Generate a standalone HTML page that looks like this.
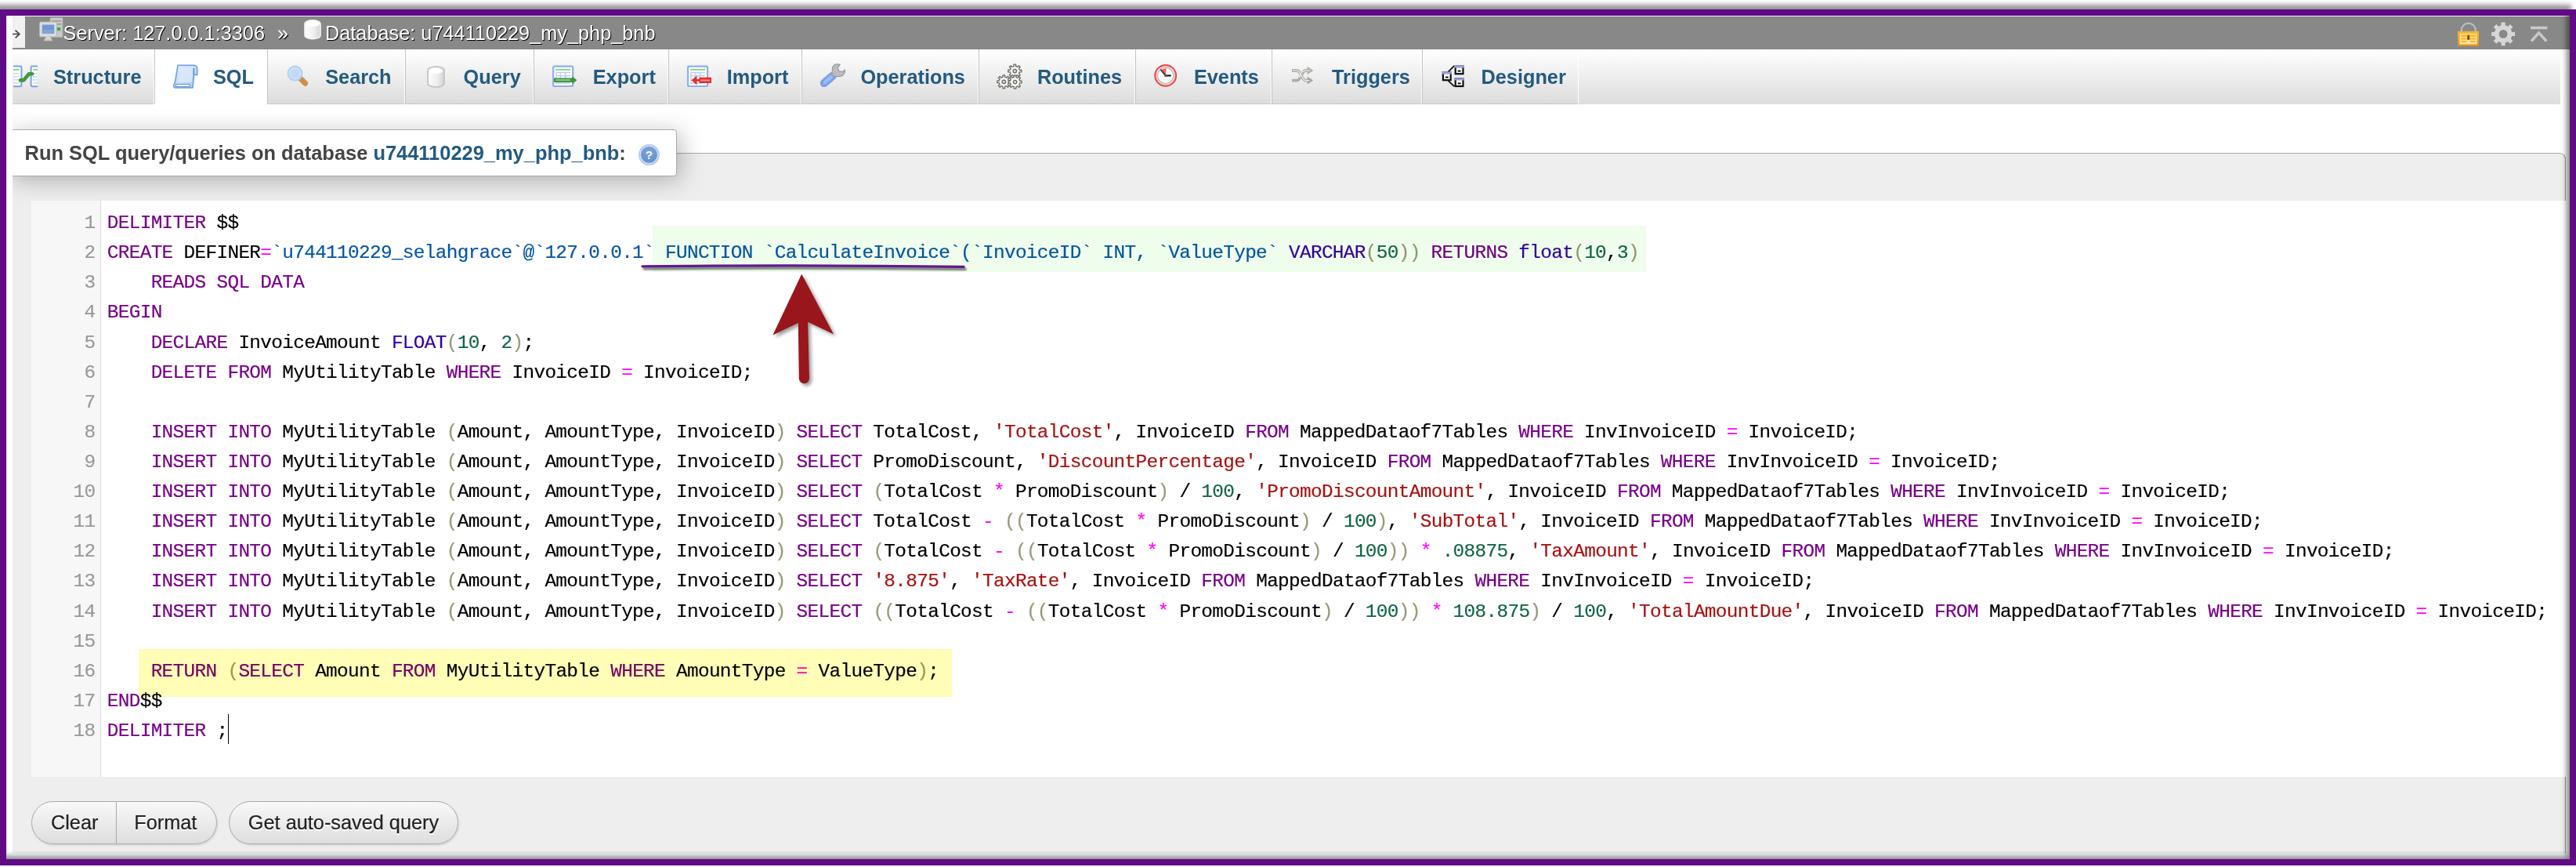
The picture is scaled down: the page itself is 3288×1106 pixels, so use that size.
<!DOCTYPE html>
<html lang="en">
<head>
<meta charset="utf-8">
<title>phpMyAdmin - Run SQL query</title>
<style>
html,body{margin:0;padding:0;}
body{width:3288px;height:1106px;position:relative;overflow:hidden;background:#fff;
  font-family:"Liberation Sans",Arial,sans-serif;}
.abs{position:absolute;}
#page{position:absolute;left:8px;top:20px;width:3272px;height:1076px;background:#fff;overflow:hidden;}
/* everything inside #stage uses full-image coordinates */
#stage{position:absolute;left:-8px;top:-20px;width:3288px;height:1106px;}
#frame{position:absolute;left:0;top:12px;width:3272px;height:1076px;border:8px solid #610a86;
  box-shadow:-6px -5.8px 6px rgba(0,0,0,.42), inset -4px -4px 7px rgba(0,0,0,.48);pointer-events:none;z-index:50;}

#topbar{left:16px;top:21px;width:3264px;height:41.5px;background:#888;}
#gohome{left:16px;top:21px;width:16px;height:40px;background:#f1f1f1;color:#333;font-size:13px;line-height:39px;text-align:center;}
.crumb{top:21.5px;height:41.5px;line-height:41.5px;color:#fff;font-size:25.3px;white-space:nowrap;
  text-shadow:1px 1px 0 #000;}

#tabs{left:16px;top:62.5px;width:3252px;height:70px;border-bottom:0;background:linear-gradient(#fff,#dcdcdc);}
.tab{top:62.5px;height:70px;box-sizing:border-box;border-left:1px solid #c2c2c2;border-right:1px solid #fff;border-bottom:1px solid #c8c8c8;}
.tab.on{background:#fff;border-bottom:1px solid #fff;}
.tl{top:62.5px;height:70px;line-height:70px;color:#235a81;font-weight:bold;font-size:25.3px;white-space:nowrap;}
.ic{width:30px;height:30px;}

#fs{left:16px;top:195px;width:3259px;height:894px;box-sizing:border-box;background:#eee;border:1px solid #aaa;border-left:0;border-bottom:0;border-right-color:#999;border-radius:0 8px 0 0;}
#legend{left:10px;top:165px;width:854px;height:60px;box-sizing:border-box;background:#fff;border:1px solid #aaa;border-radius:4px;
  box-shadow:5px 5px 30px rgba(0,0,0,.27);}
#legtxt{left:31.6px;top:165px;height:60px;line-height:61px;font-size:25.45px;font-weight:bold;color:#444;white-space:nowrap;}
#legtxt b{color:#235a81;}

#ed{left:40px;top:256px;width:3240px;height:735px;background:#fff;}
#gut{left:40px;top:256px;width:88px;height:735px;background:#f7f7f7;border-right:1px solid #ddd;}
.cl,.ln{position:absolute;font-family:"Liberation Mono","DejaVu Sans Mono",monospace;font-size:24.4px;letter-spacing:-0.672px;
  line-height:38.12px;height:38.12px;white-space:pre;color:#000;-webkit-text-stroke:0.17px currentColor;}
.cl{left:136.8px;}
.ln{left:40px;width:81.5px;text-align:right;color:#999;}
.k{color:#708}.b{color:#30a}.n{color:#164}.s{color:#a11}.p{color:#997}.o{color:#f0f}.v{color:#05a}
#hl1{left:833px;top:288px;width:1267.5px;height:59px;background:#effdec;mix-blend-mode:multiply;}
#hl2{left:177px;top:828px;width:1038px;height:61px;background:#fffdb6;mix-blend-mode:multiply;}
#cursor{left:291px;top:911px;width:1px;height:38px;background:#000;}

.btn{top:1022px;height:55px;box-sizing:border-box;border:1px solid #aaa;background:linear-gradient(#f8f8f8,#dedede);
  color:#222;font-size:25.3px;line-height:52px;text-align:center;white-space:nowrap;text-shadow:0 1.9px 0 #fff;-webkit-text-stroke:.2px #222;box-shadow:1px 1.5px 2.5px rgba(0,0,0,.12);}
</style>
</head>
<body>
<div id="page"><div id="stage">

<div id="topbar" class="abs"></div>
<div id="gohome" class="abs"></div>
<div class="abs crumb" style="left:80.6px">Server: 127.0.0.1:3306</div>
<div class="abs crumb" style="left:354px">»</div>
<div class="abs crumb" style="left:415px">Database: u744110229_my_php_bnb</div>

<div id="tabs" class="abs"></div>
<div class="abs tab" style="left:16px;width:181px;border-left:0"></div>
<div class="abs tab on" style="left:197px;width:144px"></div>
<div class="abs tab" style="left:341px;width:176px"></div>
<div class="abs tab" style="left:517px;width:164px"></div>
<div class="abs tab" style="left:681px;width:172px"></div>
<div class="abs tab" style="left:853px;width:170px"></div>
<div class="abs tab" style="left:1023px;width:226px"></div>
<div class="abs tab" style="left:1249px;width:200px"></div>
<div class="abs tab" style="left:1449px;width:174px"></div>
<div class="abs tab" style="left:1623px;width:192px"></div>
<div class="abs tab" style="left:1815px;width:200px"></div>

<div class="abs tl" style="left:68.0px">Structure</div>
<div class="abs tl" style="left:271.9px">SQL</div>
<div class="abs tl" style="left:415.2px">Search</div>
<div class="abs tl" style="left:591.6px">Query</div>
<div class="abs tl" style="left:756.7px">Export</div>
<div class="abs tl" style="left:927.7px">Import</div>
<div class="abs tl" style="left:1098.4px">Operations</div>
<div class="abs tl" style="left:1323.9px">Routines</div>
<div class="abs tl" style="left:1523.9px">Events</div>
<div class="abs tl" style="left:1700.0px">Triggers</div>
<div class="abs tl" style="left:1890.5px">Designer</div>

<!--ICONS-->

<div id="fs" class="abs"></div>
<div id="legend" class="abs"></div>
<div id="legtxt" class="abs">Run SQL query/queries on database <b>u744110229_my_php_bnb</b>:</div>

<div id="ed" class="abs"></div>
<div id="gut" class="abs"></div>
<div class="ln" style="top:266.05px">1</div>
<div class="ln" style="top:304.17px">2</div>
<div class="ln" style="top:342.29px">3</div>
<div class="ln" style="top:380.41px">4</div>
<div class="ln" style="top:418.53px">5</div>
<div class="ln" style="top:456.65px">6</div>
<div class="ln" style="top:494.77px">7</div>
<div class="ln" style="top:532.89px">8</div>
<div class="ln" style="top:571.01px">9</div>
<div class="ln" style="top:609.13px">10</div>
<div class="ln" style="top:647.25px">11</div>
<div class="ln" style="top:685.37px">12</div>
<div class="ln" style="top:723.49px">13</div>
<div class="ln" style="top:761.61px">14</div>
<div class="ln" style="top:799.73px">15</div>
<div class="ln" style="top:837.85px">16</div>
<div class="ln" style="top:875.97px">17</div>
<div class="ln" style="top:914.09px">18</div>

<div class="cl" style="top:266.05px"><span class="k">DELIMITER</span> $$</div>
<div class="cl" style="top:304.17px"><span class="k">CREATE</span> DEFINER<span class="o">=</span><span class="v">`u744110229_selahgrace`@`127.0.0.1` FUNCTION `CalculateInvoice`(`InvoiceID` INT, `ValueType`</span> <span class="b">VARCHAR</span><span class="p">(</span><span class="n">50</span><span class="p">))</span> <span class="k">RETURNS</span> <span class="b">float</span><span class="p">(</span><span class="n">10</span>,<span class="n">3</span><span class="p">)</span></div>
<div class="cl" style="top:342.29px">    <span class="k">READS</span> <span class="k">SQL</span> <span class="k">DATA</span></div>
<div class="cl" style="top:380.41px"><span class="k">BEGIN</span></div>
<div class="cl" style="top:418.53px">    <span class="k">DECLARE</span> InvoiceAmount <span class="b">FLOAT</span><span class="p">(</span><span class="n">10</span>, <span class="n">2</span><span class="p">)</span>;</div>
<div class="cl" style="top:456.65px">    <span class="k">DELETE</span> <span class="k">FROM</span> MyUtilityTable <span class="k">WHERE</span> InvoiceID <span class="o">=</span> InvoiceID;</div>
<div class="cl" style="top:494.77px"></div>
<div class="cl" style="top:532.89px">    <span class="k">INSERT</span> <span class="k">INTO</span> MyUtilityTable <span class="p">(</span>Amount, AmountType, InvoiceID<span class="p">)</span> <span class="k">SELECT</span> TotalCost, <span class="s">'TotalCost'</span>, InvoiceID <span class="k">FROM</span> MappedDataof7Tables <span class="k">WHERE</span> InvInvoiceID <span class="o">=</span> InvoiceID;</div>
<div class="cl" style="top:571.01px">    <span class="k">INSERT</span> <span class="k">INTO</span> MyUtilityTable <span class="p">(</span>Amount, AmountType, InvoiceID<span class="p">)</span> <span class="k">SELECT</span> PromoDiscount, <span class="s">'DiscountPercentage'</span>, InvoiceID <span class="k">FROM</span> MappedDataof7Tables <span class="k">WHERE</span> InvInvoiceID <span class="o">=</span> InvoiceID;</div>
<div class="cl" style="top:609.13px">    <span class="k">INSERT</span> <span class="k">INTO</span> MyUtilityTable <span class="p">(</span>Amount, AmountType, InvoiceID<span class="p">)</span> <span class="k">SELECT</span> <span class="p">(</span>TotalCost <span class="o">*</span> PromoDiscount<span class="p">)</span> / <span class="n">100</span>, <span class="s">'PromoDiscountAmount'</span>, InvoiceID <span class="k">FROM</span> MappedDataof7Tables <span class="k">WHERE</span> InvInvoiceID <span class="o">=</span> InvoiceID;</div>
<div class="cl" style="top:647.25px">    <span class="k">INSERT</span> <span class="k">INTO</span> MyUtilityTable <span class="p">(</span>Amount, AmountType, InvoiceID<span class="p">)</span> <span class="k">SELECT</span> TotalCost <span class="o">-</span> <span class="p">((</span>TotalCost <span class="o">*</span> PromoDiscount<span class="p">)</span> / <span class="n">100</span><span class="p">)</span>, <span class="s">'SubTotal'</span>, InvoiceID <span class="k">FROM</span> MappedDataof7Tables <span class="k">WHERE</span> InvInvoiceID <span class="o">=</span> InvoiceID;</div>
<div class="cl" style="top:685.37px">    <span class="k">INSERT</span> <span class="k">INTO</span> MyUtilityTable <span class="p">(</span>Amount, AmountType, InvoiceID<span class="p">)</span> <span class="k">SELECT</span> <span class="p">(</span>TotalCost <span class="o">-</span> <span class="p">((</span>TotalCost <span class="o">*</span> PromoDiscount<span class="p">)</span> / <span class="n">100</span><span class="p">))</span> <span class="o">*</span> <span class="n">.08875</span>, <span class="s">'TaxAmount'</span>, InvoiceID <span class="k">FROM</span> MappedDataof7Tables <span class="k">WHERE</span> InvInvoiceID <span class="o">=</span> InvoiceID;</div>
<div class="cl" style="top:723.49px">    <span class="k">INSERT</span> <span class="k">INTO</span> MyUtilityTable <span class="p">(</span>Amount, AmountType, InvoiceID<span class="p">)</span> <span class="k">SELECT</span> <span class="s">'8.875'</span>, <span class="s">'TaxRate'</span>, InvoiceID <span class="k">FROM</span> MappedDataof7Tables <span class="k">WHERE</span> InvInvoiceID <span class="o">=</span> InvoiceID;</div>
<div class="cl" style="top:761.61px">    <span class="k">INSERT</span> <span class="k">INTO</span> MyUtilityTable <span class="p">(</span>Amount, AmountType, InvoiceID<span class="p">)</span> <span class="k">SELECT</span> <span class="p">((</span>TotalCost <span class="o">-</span> <span class="p">((</span>TotalCost <span class="o">*</span> PromoDiscount<span class="p">)</span> / <span class="n">100</span><span class="p">))</span> <span class="o">*</span> <span class="n">108.875</span><span class="p">)</span> / <span class="n">100</span>, <span class="s">'TotalAmountDue'</span>, InvoiceID <span class="k">FROM</span> MappedDataof7Tables <span class="k">WHERE</span> InvInvoiceID <span class="o">=</span> InvoiceID;</div>
<div class="cl" style="top:799.73px"></div>
<div class="cl" style="top:837.85px">    <span class="k">RETURN</span> <span class="p">(</span><span class="k">SELECT</span> Amount <span class="k">FROM</span> MyUtilityTable <span class="k">WHERE</span> AmountType <span class="o">=</span> ValueType<span class="p">)</span>;</div>
<div class="cl" style="top:875.97px"><span class="k">END</span>$$</div>
<div class="cl" style="top:914.09px"><span class="k">DELIMITER</span> ;</div>

<div id="hl1" class="abs"></div>
<div id="hl2" class="abs"></div>
<div id="cursor" class="abs"></div>

<svg class="abs" style="left:0;top:0" width="3288" height="1106" viewBox="0 0 3288 1106">
<defs>
<linearGradient id="gcyl" x1="0" x2="1" y1="0" y2="0"><stop offset="0" stop-color="#fdfdfd"/><stop offset=".55" stop-color="#f0f0f0"/><stop offset="1" stop-color="#d2d2d2"/></linearGradient>
<linearGradient id="gsql" x1="0" x2="1" y1="0" y2="1"><stop offset="0" stop-color="#e4effc"/><stop offset="1" stop-color="#a8c8f2"/></linearGradient>
<linearGradient id="glock" x1="0" x2="0" y1="0" y2="1"><stop offset="0" stop-color="#f3b63a"/><stop offset="1" stop-color="#e8901c"/></linearGradient>
<linearGradient id="glocki" x1="0" x2="0" y1="0" y2="1"><stop offset="0" stop-color="#ffd75e"/><stop offset="1" stop-color="#ffe9a8"/></linearGradient>
<radialGradient id="ghelp" cx=".5" cy=".35" r=".7"><stop offset="0" stop-color="#7ea7da"/><stop offset="1" stop-color="#5f8ec9"/></radialGradient>
<clipPath id="cstruct"><rect x="17" y="80" width="31" height="36"/></clipPath>
<filter id="soft" x="-20%" y="-20%" width="140%" height="140%"><feGaussianBlur stdDeviation="0.6"/></filter>
<filter id="ds" x="-30%" y="-30%" width="170%" height="170%"><feGaussianBlur in="SourceAlpha" stdDeviation="2.2"/><feOffset dx="2.5" dy="3"/><feComponentTransfer><feFuncA type="linear" slope=".4"/></feComponentTransfer><feMerge><feMergeNode/><feMergeNode in="SourceGraphic"/></feMerge></filter>
<filter id="ds2" x="-5%" y="-300%" width="110%" height="800%"><feGaussianBlur in="SourceAlpha" stdDeviation="1.3"/><feOffset dx="1.5" dy="3.2"/><feComponentTransfer><feFuncA type="linear" slope=".55"/></feComponentTransfer><feMerge><feMergeNode/><feMergeNode in="SourceGraphic"/></feMerge></filter>
</defs>
<path d="M12 43.5 H24.4 M19.6 38.6 L24.8 43.5 L19.6 48.4" stroke="#444" stroke-width="1.7" fill="none" filter="url(#soft)"/>
<g filter="url(#soft)">
<rect x="64" y="22.5" width="16" height="25" rx="1.5" fill="#c9c9c9" stroke="#a9a9a9" stroke-width="1"/>
<rect x="66" y="26" width="12" height="1.6" fill="#9c9c9c"/><rect x="66" y="30" width="12" height="1.6" fill="#9c9c9c"/>
<rect x="73" y="35" width="4.2" height="4.2" fill="#3fae3f"/>
<rect x="50.5" y="28" width="22" height="19" rx="1.5" fill="#dcdcdc" stroke="#b4b4b4" stroke-width="1"/>
<rect x="53.8" y="31.5" width="15.4" height="11.4" fill="#6f9ad6"/>
<rect x="55" y="38" width="13" height="4" fill="#86abdf" opacity=".7"/>
<path d="M59 47 L64 47 L66.5 51 L56.5 51 Z" fill="#d8d8d8"/><rect x="56" y="50.5" width="11" height="1.8" fill="#c2c2c2"/>
</g>
<g filter="url(#soft)"><path d="M389 30.5 a10 4.6 0 0 1 20 0 v14.5 a10 4.6 0 0 1 -20 0 Z" fill="url(#gcyl)" stroke="#f4f4f4" stroke-width="1.6"/>
<ellipse cx="399" cy="30.5" rx="9" ry="3.8" fill="#fff"/></g>
<g filter="url(#soft)"><path d="M3141.8 41 v-2.4 a9 9 0 0 1 18 0 v2.4" fill="none" stroke="#b8bcc0" stroke-width="2.3"/>
<rect x="3137" y="39.8" width="27" height="19" fill="url(#glock)"/>
<rect x="3139.5" y="42.5" width="22" height="14" fill="url(#glocki)"/>
<g stroke="#eaa626" stroke-width="1.3"><path d="M3141.5 46h7M3141.5 49.5h7M3141.5 53h7M3153 46h7M3153 49.5h7M3153 53h7"/></g>
<rect x="3149" y="44.5" width="3.4" height="6.6" fill="#b06a10"/><rect x="3150" y="45.5" width="1.4" height="4.4" fill="#5a3a10"/></g>
<g filter="url(#soft)"><path d="M3206.23 40.91 L3210.07 40.74 L3210.07 46.06 L3206.23 45.89 L3204.73 49.51 L3207.56 52.10 L3203.80 55.86 L3201.21 53.03 L3197.59 54.53 L3197.76 58.37 L3192.44 58.37 L3192.61 54.53 L3188.99 53.03 L3186.40 55.86 L3182.64 52.10 L3185.47 49.51 L3183.97 45.89 L3180.13 46.06 L3180.13 40.74 L3183.97 40.91 L3185.47 37.29 L3182.64 34.70 L3186.40 30.94 L3188.99 33.77 L3192.61 32.27 L3192.44 28.43 L3197.76 28.43 L3197.59 32.27 L3201.21 33.77 L3203.80 30.94 L3207.56 34.70 L3204.73 37.29 Z" fill="#d6d6d6"/><circle cx="3195.1" cy="43.4" r="5.4" fill="#888"/>
</g>
<g stroke="#c9c9c9" stroke-width="3.6" fill="none" filter="url(#soft)"><path d="M3230 35.5 H3251.3"/><path d="M3231 52.5 L3240.6 41.8 L3250.3 52.5" stroke-width="3.4"/></g>
<g clip-path="url(#cstruct)" filter="url(#soft)">
<rect x="9" y="84.6" width="18.4" height="25.6" rx="1.5" fill="#fff" stroke="#7da3e2" stroke-width="2"/>
<rect x="12" y="93" width="12.399999999999999" height="1.6" fill="#c9dbf6"/>
<rect x="12" y="97" width="12.399999999999999" height="1.6" fill="#c9dbf6"/>
<rect x="12" y="101" width="12.399999999999999" height="1.6" fill="#c9dbf6"/>
<rect x="12" y="105" width="12.399999999999999" height="1.6" fill="#c9dbf6"/>
<rect x="39.6" y="84.6" width="17.4" height="25.6" rx="1.5" fill="#fff" stroke="#7da3e2" stroke-width="2"/>
<rect x="42.6" y="93" width="11.399999999999999" height="1.6" fill="#c9dbf6"/>
<rect x="42.6" y="97" width="11.399999999999999" height="1.6" fill="#c9dbf6"/>
<rect x="42.6" y="101" width="11.399999999999999" height="1.6" fill="#c9dbf6"/>
<rect x="42.6" y="105" width="11.399999999999999" height="1.6" fill="#c9dbf6"/>
<rect x="17" y="87.8" width="7.5" height="2" fill="#8fd08a"/><rect x="42.5" y="87.8" width="6" height="2" fill="#8fd08a"/>
<rect x="42" y="93" width="2" height="2" fill="#bcd2f2"/><rect x="42" y="97" width="2" height="2" fill="#bcd2f2"/><rect x="42" y="101" width="2" height="2" fill="#bcd2f2"/>
<path d="M26 102.4 H30 L37 94.2 H41" fill="none" stroke="#3d9b3d" stroke-width="4.6" stroke-linejoin="round" stroke-linecap="round"/>
</g>
<g filter="url(#soft)">
<path d="M227 83.2 H247.5 a4.2 4.2 0 0 1 4.2 4.2 V95.5 H247.6 L246 112 H224 a2.6 2.6 0 0 1 -2.2 -3.6 l1.6 -3 Z" fill="url(#gsql)" stroke="#6c9fe0" stroke-width="1.6" stroke-linejoin="round"/>
<path d="M229.6 86 H246 L244.6 105 H228 Z" fill="#d9e8fb" opacity=".9"/>
<path d="M247.4 87 v8.4" stroke="#4f86d4" stroke-width="1.4"/>
<path d="M224.5 107.6 H242 v3 H224.5 Z" fill="#fff" stroke="#5b8fd8" stroke-width="1"/>
</g>
<g filter="url(#soft)"><path d="M383.8 100.6 L389.6 106.2" stroke="#c9924c" stroke-width="7" stroke-linecap="round"/>
<circle cx="376.6" cy="93.6" r="8.9" fill="#cfe1f8" stroke="#b4d0f5" stroke-width="2.2"/><circle cx="376.6" cy="93.6" r="5.8" fill="#c2d9f6"/></g>
<g filter="url(#soft)"><path d="M546 90 a10.5 5 0 0 1 21 0 v16 a10.5 5 0 0 1 -21 0 Z" fill="url(#gcyl)" stroke="#c7c7c7" stroke-width="2"/>
<ellipse cx="556.5" cy="90.4" rx="8.6" ry="3.6" fill="#fff"/></g>
<g filter="url(#soft)">
<rect x="706.2" y="84.6" width="25" height="25.4" rx="1.5" fill="#fff" stroke="#8db0e8" stroke-width="2.2"/>
<rect x="709.2" y="87.8" width="19" height="2" fill="#8fd08f"/>
<g stroke="#b9cff2" stroke-width="1.4" fill="none"><path d="M709.7 92.5 H727.7 M709.7 96.8 H727.7 M709.7 101.4 H727.7 M709.7 106 H727.7 M710.0 92.5 V107 M715.2 92.5 V107 M721.7 92.5 V107"/></g>
<path d="M707 99.4 H730.5 V97.2 L736.4 102.2 L730.5 107.2 V105 H707 Z" fill="#3f9340"/><rect x="709" y="101.2" width="19" height="1.8" fill="#8fcc8f"/>
<rect x="878.1" y="84.6" width="25" height="25.4" rx="1.5" fill="#fff" stroke="#8db0e8" stroke-width="2.2"/>
<rect x="881.1" y="87.8" width="19" height="2" fill="#8fd08f"/>
<g stroke="#b9cff2" stroke-width="1.4" fill="none"><path d="M881.6 92.5 H899.6 M881.6 96.8 H899.6 M881.6 101.4 H899.6 M881.6 106 H899.6 M881.9 92.5 V107 M887.1 92.5 V107 M893.6 92.5 V107"/></g>
<path d="M908 98.8 H892.5 V101 L889.5 101 V96.6 L882.4 102.4 L889.5 108.2 V103.8 H892.5 V106 H908 Z" fill="#ee2c2c"/><rect x="894" y="101.6" width="12" height="1.8" fill="#f9a0a0"/>
</g>
<g filter="url(#soft)"><path d="M1052 106 L1062.5 97" stroke="#7ba3ea" stroke-width="10.4" stroke-linecap="round"/><path d="M1053 105 L1061 98.2" stroke="#9dbbf0" stroke-width="4.4" stroke-linecap="round"/>
<path d="M1062 96 L1062.6 86 a7 7 0 0 1 7.5 -4 l2.2 .2 -3 4.2 1.6 4.4 4.8 .8 2.8 -2.8 a7.6 7.6 0 0 1 -6 8.6 L1066 97.6 Z" fill="#bdbdbd" stroke="#9a9a9a" stroke-width="1.2" stroke-linejoin="round"/></g>
<g filter="url(#soft)" stroke="#6b6b64" stroke-width="1.3">
<path d="M1301.48 89.37 L1303.79 89.25 L1303.79 91.95 L1301.48 91.83 L1300.54 94.10 L1302.26 95.65 L1300.35 97.56 L1298.80 95.84 L1296.53 96.78 L1296.65 99.09 L1293.95 99.09 L1294.07 96.78 L1291.80 95.84 L1290.25 97.56 L1288.34 95.65 L1290.06 94.10 L1289.12 91.83 L1286.81 91.95 L1286.81 89.25 L1289.12 89.37 L1290.06 87.10 L1288.34 85.55 L1290.25 83.64 L1291.80 85.36 L1294.07 84.42 L1293.95 82.11 L1296.65 82.11 L1296.53 84.42 L1298.80 85.36 L1300.35 83.64 L1302.26 85.55 L1300.54 87.10 Z" fill="#f1f1f1" stroke-linejoin="round"/><circle cx="1295.3" cy="90.6" r="2.2" fill="#ddd"/>
<path d="M1287.48 103.07 L1289.79 102.95 L1289.79 105.65 L1287.48 105.53 L1286.54 107.80 L1288.26 109.35 L1286.35 111.26 L1284.80 109.54 L1282.53 110.48 L1282.65 112.79 L1279.95 112.79 L1280.07 110.48 L1277.80 109.54 L1276.25 111.26 L1274.34 109.35 L1276.06 107.80 L1275.12 105.53 L1272.81 105.65 L1272.81 102.95 L1275.12 103.07 L1276.06 100.80 L1274.34 99.25 L1276.25 97.34 L1277.80 99.06 L1280.07 98.12 L1279.95 95.81 L1282.65 95.81 L1282.53 98.12 L1284.80 99.06 L1286.35 97.34 L1288.26 99.25 L1286.54 100.80 Z" fill="#f1f1f1" stroke-linejoin="round"/><circle cx="1281.3" cy="104.3" r="2.2" fill="#ddd"/>
<path d="M1301.78 103.37 L1304.09 103.25 L1304.09 105.95 L1301.78 105.83 L1300.84 108.10 L1302.56 109.65 L1300.65 111.56 L1299.10 109.84 L1296.83 110.78 L1296.95 113.09 L1294.25 113.09 L1294.37 110.78 L1292.10 109.84 L1290.55 111.56 L1288.64 109.65 L1290.36 108.10 L1289.42 105.83 L1287.11 105.95 L1287.11 103.25 L1289.42 103.37 L1290.36 101.10 L1288.64 99.55 L1290.55 97.64 L1292.10 99.36 L1294.37 98.42 L1294.25 96.11 L1296.95 96.11 L1296.83 98.42 L1299.10 99.36 L1300.65 97.64 L1302.56 99.55 L1300.84 101.10 Z" fill="#fafafa" stroke-linejoin="round"/><circle cx="1295.6" cy="104.6" r="2.2" fill="#ddd"/>
</g>
<g filter="url(#soft)"><circle cx="1487.7" cy="96.4" r="13.3" fill="#fff" stroke="#f04a4a" stroke-width="2.3"/><circle cx="1487.7" cy="96.4" r="10.4" fill="#fbfbfb" stroke="#c4c4c0" stroke-width="1.8"/>
<path d="M1487.7 96.4 L1483 89 A8.8 8.8 0 0 1 1488.6 87.6 Z" fill="#f05a5a"/>
<path d="M1487.7 96.4 L1481.8 89.2" stroke="#333" stroke-width="1.8" stroke-linecap="round"/><path d="M1487.7 96.4 H1494" stroke="#111" stroke-width="2" stroke-linecap="round"/><circle cx="1487.7" cy="96.4" r="1.6" fill="#555"/></g>
<g filter="url(#soft)" fill="none" stroke="#adaea9" stroke-width="3.8" stroke-linejoin="round">
<path d="M1649 90 H1655.5 C1660.5 90 1661 102.6 1666.5 102.6 H1670"/><path d="M1649 102.6 H1655.5 C1660.5 102.6 1661 90 1666.5 90 H1670"/>
<path d="M1669 85.6 L1675.6 90 L1669 94.4 Z" fill="#b4b5b0" stroke-width="1"/><path d="M1669 98.2 L1675.6 102.6 L1669 107 Z" fill="#a2a39e" stroke-width="1"/>
<g stroke="#f2f2f0" stroke-width="1.2"><path d="M1650 90 H1655.5 C1660.5 90 1661 102.6 1666.5 102.6 H1671.5"/><path d="M1658.5 98.6 C1660 94 1662 90 1666.5 90 H1671.5"/></g>
</g>
<g filter="url(#soft)">
<path d="M1848.6 91.6 L1856.2 83.8 M1848.6 103.2 L1856.4 110.4" stroke="#111" stroke-width="1.8"/>
<rect x="1841.9" y="92.6" width="9.8" height="9.6" fill="#fff" stroke="#111" stroke-width="2.2"/><rect x="1840.7" y="91.6" width="12.2" height="3" fill="#9b9bdc"/><rect x="1844.9" y="97.6" width="3.8" height="2" fill="#111"/>
<rect x="1857.7" y="84.6" width="9.8" height="9.6" fill="#fff" stroke="#111" stroke-width="2.2"/><rect x="1856.5" y="83.6" width="12.2" height="3" fill="#9b9bdc"/><rect x="1860.7" y="89.6" width="3.8" height="2" fill="#111"/>
<rect x="1857.7" y="100.4" width="9.8" height="9.6" fill="#fff" stroke="#111" stroke-width="2.2"/><rect x="1856.5" y="99.4" width="12.2" height="3" fill="#9b9bdc"/><rect x="1860.7" y="105.4" width="3.8" height="2" fill="#111"/>
</g>
<g filter="url(#soft)"><circle cx="828.5" cy="197.4" r="13.4" fill="#a9c5ea"/><circle cx="828.5" cy="197.4" r="11.6" fill="none" stroke="#dbe8f8" stroke-width="1"/><circle cx="828.5" cy="197.4" r="10.2" fill="url(#ghelp)"/>
<text x="828.5" y="203" text-anchor="middle" font-family="Liberation Sans,Arial,sans-serif" font-weight="bold" font-size="15.5" fill="#fff">?</text></g>
<g filter="url(#ds2)"><path d="M820 339.8 Q1026 337.6 1230.2 340.4" fill="none" stroke="#5d1a8c" stroke-width="3.2" stroke-linecap="round"/></g>
<g filter="url(#ds)"><path d="M1023.2 349.6 L1064 426.2 L1031.2 410.8 L1033 482.4 a6.6 6.6 0 0 1 -13.2 .4 L1018.8 412 L986.4 427.6 Z" fill="#98181b"/></g>
</svg>

<div class="abs btn" style="left:40px;width:109px;border-radius:28px 0 0 28px;padding-left:1.4px">Clear</div>
<div class="abs btn" style="left:148px;width:129px;border-radius:0 28px 28px 0;padding-right:2.4px">Format</div>
<div class="abs btn" style="left:292px;width:293px;border-radius:28px">Get auto-saved query</div>

<div class="abs" style="left:8px;top:20px;width:8px;height:1076px;background:#fff"></div>
</div></div>
<div id="frame"></div>
</body>
</html>
